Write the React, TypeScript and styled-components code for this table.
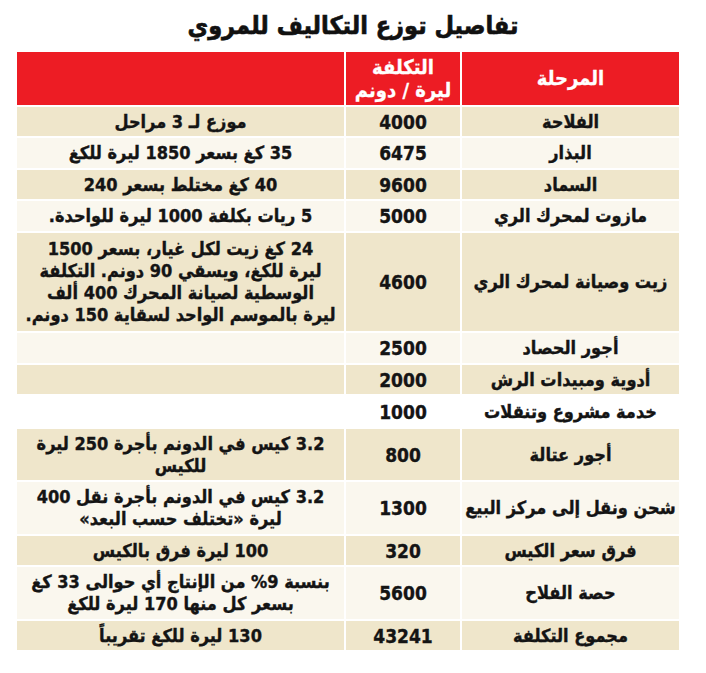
import React from 'react';
import styled, { createGlobalStyle } from 'styled-components';

// Global reset
const GlobalStyle = createGlobalStyle`
  html, body {
    margin: 0;
    padding: 0;
    background: #ffffff;
  }
  body {
    font-family: 'DejaVu Sans', 'Noto Sans', sans-serif;
  }
`;

type Tone = 'beige' | 'light' | 'white';

const tones: Record<Tone, string> = {
  beige: '#efe6cb',
  light: '#faf7ee',
  white: '#ffffff',
};

// Page
const Page = styled.div`
  width: 706px;
  direction: rtl;
  display: flex;
  flex-direction: column;
  align-items: center;
  padding-top: 6px;
  box-sizing: border-box;
`;

const Title = styled.h1`
  margin: 0;
  font-family: 'DejaVu Sans Condensed', 'DejaVu Sans', sans-serif;
  font-stretch: condensed;
  font-weight: 700;
  font-size: 25px;
  line-height: 40px;
  color: #111;
  -webkit-text-stroke: 0.6px #111;
`;

const Table = styled.div`
  margin-top: 6px;
  width: 662px;
  margin-right: 10px;
  display: flex;
  flex-direction: column;
  gap: 2px;
`;

const Row = styled.div<{ $h: number }>`
  display: grid;
  grid-template-columns: 217px 114px 327px;
  column-gap: 2px;
  height: ${(p) => p.$h}px;
`;

const Cell = styled.div<{ $tone: Tone }>`
  background: ${(p) => tones[p.$tone]};
  display: flex;
  align-items: center;
  justify-content: center;
  text-align: center;
  white-space: nowrap;
  font-family: 'DejaVu Sans Condensed', 'DejaVu Sans', sans-serif;
  font-stretch: condensed;
  font-weight: 700;
  font-size: 18px;
  line-height: 22px;
  color: #141414;
  letter-spacing: -0.3px;
  -webkit-text-stroke: 0.35px #141414;
  padding: 0 4px;
  box-sizing: border-box;
`;

const HeadCell = styled.div`
  background: #ed1c24;
  display: flex;
  align-items: center;
  justify-content: center;
  text-align: center;
  color: #ffffff;
  font-family: 'DejaVu Sans Condensed', 'DejaVu Sans', sans-serif;
  font-stretch: condensed;
  font-weight: 700;
  font-size: 20px;
  line-height: 23px;
  letter-spacing: -0.3px;
  -webkit-text-stroke: 0.3px #ffffff;
`;

const Num = styled.span`
  font-size: 19px;
  letter-spacing: 0;
`;

const Lines = ({ text }: { text: string[] }) => (
  <span>
    {text.map((t, i) => (
      <React.Fragment key={i}>
        {i > 0 && <br />}
        {t}
      </React.Fragment>
    ))}
  </span>
);

interface Item {
  stage: string;
  cost: string;
  note: string[];
  h: number;
  tone: Tone;
}

const rows: Item[] = [
  { stage: 'الفلاحة', cost: '4000', note: ['موزع لـ 3 مراحل'], h: 29, tone: 'beige' },
  { stage: 'البذار', cost: '6475', note: ['35 كغ بسعر 1850 ليرة للكغ'], h: 30, tone: 'light' },
  { stage: 'السماد', cost: '9600', note: ['40 كغ مختلط بسعر 240'], h: 29, tone: 'beige' },
  { stage: 'مازوت لمحرك الري', cost: '5000', note: ['5 ريات بكلفة 1000 ليرة للواحدة.'], h: 30, tone: 'light' },
  {
    stage: 'زيت وصيانة لمحرك الري',
    cost: '4600',
    note: [
      '24 كغ زيت لكل غيار، بسعر 1500',
      'ليرة للكغ، ويسقي 90 دونم. التكلفة',
      'الوسطية لصيانة المحرك 400 ألف',
      'ليرة بالموسم الواحد لسقاية 150 دونم.',
    ],
    h: 98,
    tone: 'beige',
  },
  { stage: 'أجور الحصاد', cost: '2500', note: [], h: 30, tone: 'light' },
  { stage: 'أدوية ومبيدات الرش', cost: '2000', note: [], h: 29, tone: 'beige' },
  { stage: 'خدمة مشروع وتنقلات', cost: '1000', note: [], h: 31, tone: 'white' },
  { stage: 'أجور عتالة', cost: '800', note: ['3.2 كيس في الدونم بأجرة 250 ليرة', 'للكيس'], h: 51, tone: 'beige' },
  {
    stage: 'شحن ونقل إلى مركز البيع',
    cost: '1300',
    note: ['3.2 كيس في الدونم بأجرة نقل 400', 'ليرة «تختلف حسب البعد»'],
    h: 52,
    tone: 'light',
  },
  { stage: 'فرق سعر الكيس', cost: '320', note: ['100 ليرة فرق بالكيس'], h: 29, tone: 'beige' },
  {
    stage: 'حصة الفلاح',
    cost: '5600',
    note: ['بنسبة 9% من الإنتاج أي حوالى 33 كغ', 'بسعر كل منها 170 ليرة للكغ'],
    h: 52,
    tone: 'light',
  },
  { stage: 'مجموع التكلفة', cost: '43241', note: ['130 ليرة للكغ تقريباً'], h: 29, tone: 'beige' },
];

export default function App() {
  return (
    <>
      <GlobalStyle />
      <Page>
        <Title>تفاصيل توزع التكاليف للمروي</Title>
        <Table>
          <Row $h={53}>
            <HeadCell>المرحلة</HeadCell>
            <HeadCell>
              <Lines text={['التكلفة', 'ليرة / دونم']} />
            </HeadCell>
            <HeadCell />
          </Row>
          {rows.map((r) => (
            <Row key={r.stage} $h={r.h}>
              <Cell $tone={r.tone}>{r.stage}</Cell>
              <Cell $tone={r.tone}>
                <Num>{r.cost}</Num>
              </Cell>
              <Cell $tone={r.tone}>
                <Lines text={r.note} />
              </Cell>
            </Row>
          ))}
        </Table>
      </Page>
    </>
  );
}
